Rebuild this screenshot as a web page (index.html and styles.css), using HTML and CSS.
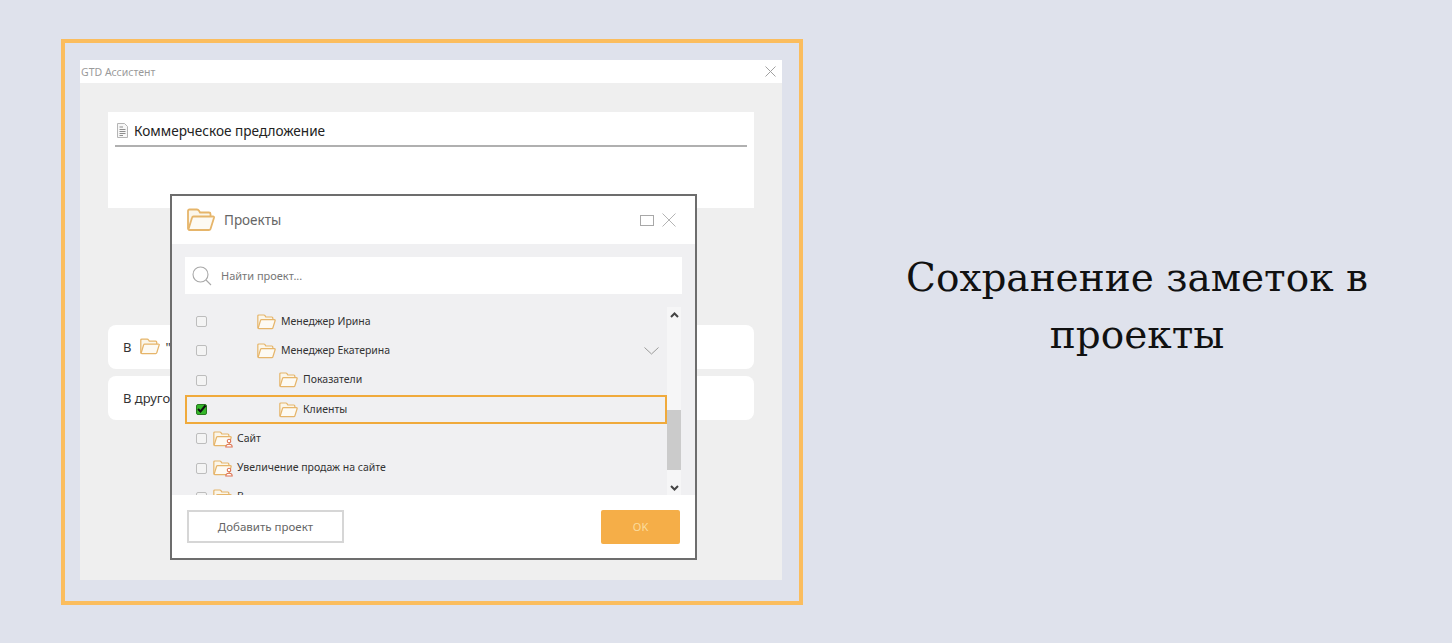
FILE: index.html
```html
<!DOCTYPE html>
<html lang="ru">
<head>
    <meta charset="UTF-8">
    <meta name="viewport" content="width=device-width, initial-scale=1.0">
    <title>Сохранение заметок в проекты</title>
    <link rel="stylesheet" href="styles.css">
</head>
<body>
    <svg class="icon-defs" width="0" height="0">
        <symbol id="folder" viewBox="0 0 28 24">
            <path d="M5 21.5 H2.5 C1.6 21.5 1 20.9 1 20 V3 C1 2 1.6 1.5 2.5 1.5 H10 C11 1.5 11.5 2 12 2.8 L13 4.5 H22 C23 4.5 23.5 5 23.5 6 V8.5" fill="#fbf6ea" stroke="currentColor" stroke-width="1.8"/>
            <path d="M6.5 8.5 H26 C26.8 8.5 27.2 9 27 9.8 L23.5 21 C23.3 21.6 22.9 22 22 22 H2.5 C1.8 22 1.4 21.5 1.6 20.8 L5 9.8 C5.2 9 5.7 8.5 6.5 8.5 Z" fill="#fdfaf3" stroke="currentColor" stroke-width="1.8"/>
        </symbol>
        <symbol id="person" viewBox="0 0 10 12">
            <circle cx="5" cy="3.6" r="2.2" fill="#fff" stroke="currentColor" stroke-width="1.3"/>
            <path d="M1 11 C1 8.6 2.6 7.6 5 7.6 C7.4 7.6 9 8.6 9 11 Z" fill="#fff" stroke="currentColor" stroke-width="1.3"/>
        </symbol>
    </svg>

    <div class="frame">
        <div class="window">
            <div class="titlebar">
                <span>GTD Ассистент</span>
                <svg class="win-close" width="11" height="11" viewBox="0 0 11 11"><path d="M0.5 0.5 L10.5 10.5 M10.5 0.5 L0.5 10.5" stroke="#8a8a8a" fill="none"/></svg>
            </div>
            <div class="window-body">
                <div class="note-card">
                    <div class="note-title">
                        <svg class="note-icon" width="11" height="15" viewBox="0 0 11 15">
                            <path d="M0.5 0.5 H7.5 L10.5 3.5 V14.5 H0.5 Z" fill="#f7f7f7" stroke="#b5b5b5"/>
                            <path d="M2.5 4 H6 M2.5 6.5 H8.5 M2.5 8.5 H8.5 M2.5 10.5 H8.5 M2.5 12.5 H6" stroke="#8e8e8e" fill="none"/>
                        </svg>
                        <span>Коммерческое предложение</span>
                    </div>
                </div>
                <div class="target-card target-first">
                    <span>В</span>
                    <svg class="folder folder-target"><use href="#folder"/></svg>
                    <span>"</span>
                </div>
                <div class="target-card"><span>В другой</span></div>
            </div>

            <div class="dialog">
                <div class="dialog-head">
                    <svg class="folder folder-head"><use href="#folder"/></svg>
                    <span class="dialog-title">Проекты</span>
                    <span class="max-box"></span>
                    <svg width="14" height="14" viewBox="0 0 14 14"><path d="M0.5 0.5 L13.5 13.5 M13.5 0.5 L0.5 13.5" stroke="#b4b4b4" fill="none"/></svg>
                </div>
                <div class="dialog-body">
                    <div class="search">
                        <svg width="20" height="20" viewBox="0 0 20 20"><circle cx="8.5" cy="8.5" r="7.5" fill="none" stroke="#a8a8a8" stroke-width="1.1"/><path d="M14 14 L19 19" stroke="#a8a8a8" stroke-width="1.1"/></svg>
                        <span>Найти проект...</span>
                    </div>
                    <div class="tree">
                        <div class="tree-list">
                            <div class="row"><span class="check"></span><svg class="folder level-2"><use href="#folder"/></svg><span class="row-text">Менеджер Ирина</span></div>
                            <div class="row"><span class="check"></span><svg class="folder level-2"><use href="#folder"/></svg><span class="row-text">Менеджер Екатерина</span>
                                <svg class="row-expand" width="15" height="8" viewBox="0 0 15 8"><path d="M0.5 0.5 L7.5 7 L14.5 0.5" fill="none" stroke="#9a9a9a"/></svg>
                            </div>
                            <div class="row"><span class="check"></span><svg class="folder level-3"><use href="#folder"/></svg><span class="row-text">Показатели</span></div>
                            <div class="row row-selected"><span class="check check-on"><svg width="11" height="10" viewBox="0 0 11 10"><path d="M2 5 L4.5 7.5 L9.5 1.5" fill="none" stroke="#111" stroke-width="2"/></svg></span><svg class="folder level-3"><use href="#folder"/></svg><span class="row-text">Клиенты</span></div>
                            <div class="row"><span class="check"></span><span class="folder-owner level-1"><svg class="folder"><use href="#folder"/></svg><svg class="person"><use href="#person"/></svg></span><span class="row-text">Сайт</span></div>
                            <div class="row"><span class="check"></span><span class="folder-owner level-1"><svg class="folder"><use href="#folder"/></svg><svg class="person"><use href="#person"/></svg></span><span class="row-text">Увеличение продаж на сайте</span></div>
                            <div class="row"><span class="check"></span><span class="folder-owner level-1"><svg class="folder"><use href="#folder"/></svg></span><span class="row-text">В</span></div>
                        </div>
                        <div class="scrollbar">
                            <svg class="scroll-up" width="9" height="6" viewBox="0 0 9 6"><path d="M1 5 L4.5 1.5 L8 5" fill="none" stroke="#444" stroke-width="2"/></svg>
                            <div class="scroll-thumb"></div>
                            <svg class="scroll-down" width="9" height="6" viewBox="0 0 9 6"><path d="M1 1 L4.5 4.5 L8 1" fill="none" stroke="#444" stroke-width="2"/></svg>
                        </div>
                    </div>
                </div>
                <div class="dialog-foot">
                    <button class="btn-add">Добавить проект</button>
                    <button class="btn-ok">OK</button>
                </div>
            </div>
        </div>
    </div>

    <div class="caption">Сохранение заметок в проекты</div>
</body>
</html>
```

FILE: styles.css
```css
* {
    box-sizing: border-box;
}

body {
    display: flex;
    align-items: flex-start;
    margin: 0;
    height: 643px;
    overflow: hidden;
    background-color: #dfe2ec;
    font-family: "Noto Sans", "Open Sans", sans-serif;
}

.icon-defs {
    display: block;
    width: 0;
    height: 0;
}

.frame {
    flex: none;
    width: 742px;
    height: 566px;
    margin: 39px 0 0 61px;
    padding: 17px 17px 21px 15px;
    border: 4px solid #fbbd5e;
}

.window {
    position: relative;
    height: 100%;
    background-color: #efefef;
}

.titlebar {
    display: flex;
    justify-content: space-between;
    align-items: center;
    height: 23px;
    padding: 0 6px 0 1px;
    background-color: white;
    color: #9a9a9a;
    font-size: 10.5px;
}

.win-close {
    opacity: 0.8;
}

.window-body {
    padding: 29px 28px 0 28px;
}

.note-card {
    height: 96px;
    padding: 7px 7px 0 7px;
    background-color: white;
}

.note-title {
    display: flex;
    align-items: center;
    gap: 6px;
    height: 28px;
    padding: 0 0 3px 2px;
    border-bottom: 2px solid #b0b0b0;
    color: #222;
    font-size: 13.6px;
}

.target-card {
    display: flex;
    align-items: center;
    height: 44px;
    margin-top: 7px;
    padding-left: 15px;
    background-color: white;
    border-radius: 8px;
    color: #333;
    font-size: 13px;
}

.target-first {
    margin-top: 117px;
}

.folder {
    width: 19px;
    height: 16px;
    flex: none;
    color: #e6b56a;
}

.folder-target {
    width: 20px;
    height: 17px;
    margin: 0 5px 2px 9px;
}

.dialog {
    position: absolute;
    left: 90px;
    top: 134px;
    display: flex;
    flex-direction: column;
    width: 527px;
    height: 366px;
    background-color: white;
    border: 2px solid #6d6d6d;
}

.dialog-head {
    display: flex;
    align-items: center;
    flex: none;
    height: 48px;
    padding: 0 19px 0 15px;
}

.folder-head {
    width: 28px;
    height: 24px;
    margin-right: 9px;
}

.dialog-title {
    flex: 1;
    color: #666;
    font-size: 13.5px;
}

.max-box {
    width: 14px;
    height: 11px;
    margin-right: 8px;
    border: 1px solid #a8a8a8;
}

.dialog-body {
    display: flex;
    flex: none;
    flex-direction: column;
    height: 251px;
    padding: 13px 0 0 13px;
    background-color: #f0f0f2;
}

.search {
    display: flex;
    align-items: center;
    gap: 9px;
    flex: none;
    width: 497px;
    height: 37px;
    padding-left: 7px;
    background-color: white;
    color: #777;
    font-size: 11px;
}

.tree {
    display: flex;
    flex: 1;
    margin-top: 13px;
    overflow: hidden;
}

.tree-list {
    width: 482px;
    overflow: hidden;
}

.row {
    display: flex;
    align-items: center;
    height: 29.3px;
    padding-left: 11px;
    color: #333;
    font-size: 10.5px;
}

.row-text {
    padding-bottom: 2px;
}

.row .folder {
    margin-right: 5px;
}

.folder-owner .folder {
    display: block;
}

.row-selected {
    box-shadow: inset 0 0 0 2px #f0aa3c;
}

.row-expand {
    margin-left: auto;
    margin-right: 8px;
}

.check {
    display: block;
    flex: none;
    width: 11px;
    height: 11px;
    background-color: #f4f4f4;
    border: 1px solid #bdbdbd;
    border-radius: 2px;
}

.check-on {
    position: relative;
    background-color: #35b82a;
    border-color: #2a7a22;
}

.check-on svg {
    position: absolute;
    left: -1px;
    top: -1px;
}

.level-1 {
    margin-left: 6px;
}

.level-2 {
    margin-left: 50px;
}

.level-3 {
    margin-left: 72px;
}

.folder-owner {
    position: relative;
    display: block;
    flex: none;
    width: 19px;
    height: 16px;
    margin-right: 5px;
}

.person {
    position: absolute;
    right: -1px;
    bottom: -1px;
    width: 8px;
    height: 10px;
    color: #dd7050;
}

.scrollbar {
    display: flex;
    flex-direction: column;
    align-items: center;
    flex: none;
    width: 14px;
    background-color: #f6f6f7;
}

.scroll-up {
    margin-top: 5px;
}

.scroll-thumb {
    width: 14px;
    height: 60px;
    margin-top: 92px;
    background-color: #cbcbcb;
}

.scroll-down {
    margin-top: 15px;
}

.dialog-foot {
    display: flex;
    justify-content: space-between;
    align-items: center;
    flex: 1;
    padding: 0 15px 0 15px;
}

.btn-add {
    width: 157px;
    height: 33px;
    padding: 0;
    background-color: white;
    border: 2px solid #d6d6d6;
    color: #666;
    font-family: inherit;
    font-size: 11.5px;
}

.btn-ok {
    width: 79px;
    height: 34px;
    padding: 0;
    background-color: #f5ae48;
    border: none;
    border-radius: 2px;
    color: #fbdc9d;
    font-family: inherit;
    font-size: 11px;
}

.caption {
    flex: 1;
    align-self: center;
    padding: 0 35px 32px 54px;
    color: #111;
    font-family: "DejaVu Serif", "Liberation Serif", serif;
    font-size: 39px;
    line-height: 57px;
    text-align: center;
}
```
